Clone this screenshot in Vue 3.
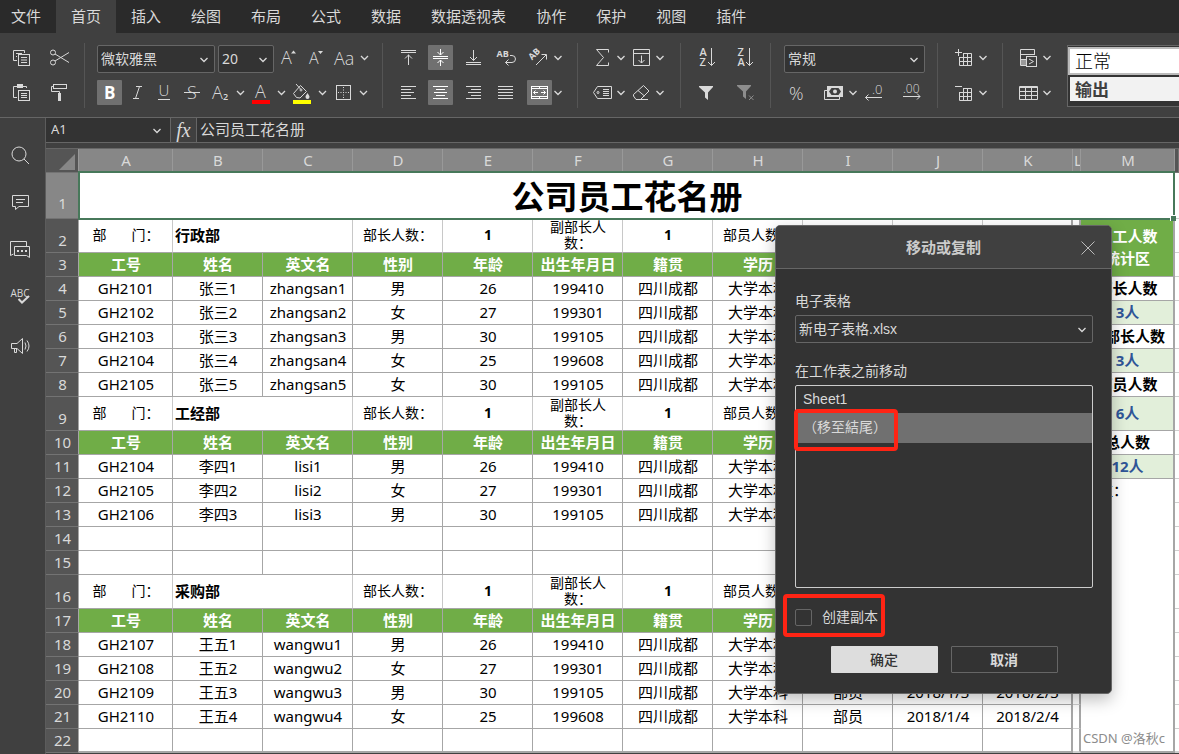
<script setup>
import { ref } from 'vue'

const menus = ['文件', '首页', '插入', '绘图', '布局', '公式', '数据', '数据透视表', '协作', '保护', '视图', '插件']

const icons = {
  copy: '<path d="M8 15.5H4.5V5.5H15.5V8M7 8.5H13M7 11.5H8"/><rect x="9.5" y="9.5" width="11" height="11"/><path d="M12 12.5H18M12 15H18M12 17.5H18"/>',
  cut: '<circle cx="6" cy="7.5" r="2.5"/><circle cx="6" cy="17.5" r="2.5"/><path d="M8 9L22 17.5M8 16L22 7.5"/>',
  paste: '<path d="M8 17.5H4.5V6.5H17.5V8"/><rect x="8" y="4" width="6" height="4" fill="currentColor" stroke="none"/><rect x="9.5" y="10.5" width="11" height="10"/><path d="M12 13.5H18M12 15.5H18M12 17.5H18"/>',
  painter: '<rect x="6.5" y="4.5" width="13" height="4"/><path d="M6.5 6.5H4.5V11.5H12.5V14"/><rect x="11" y="13" width="3" height="8" fill="currentColor" stroke="none"/>',
  grow: '<text x="4" y="19" font-size="18">A</text><path class="f" d="M14 8.5L16.5 5.5 19 8.5Z"/>',
  shrink: '<text x="4" y="19" font-size="16">A</text><path class="f" d="M13 6L18 6 15.500 9Z"/>',
  case: '<text x="1" y="20" font-size="18">Aa</text>',
  bold: '<text x="7" y="19" font-size="17" style="font-weight:700">B</text>',
  italic: '<path d="M11 6.500H17M8 18.500H14M14.500 6.500L10.500 18.500"/>',
  underline: '<text x="5.500" y="16" font-size="15">U</text><path d="M5 19.500H17"/>',
  strike: '<text x="6" y="19" font-size="18">S</text><path d="M3 12.500H19"/>',
  sub: '<text x="3" y="19" font-size="18">A</text><text x="14" y="20" font-size="9" style="font-weight:600">2</text>',
  color: '<text x="5" y="18" font-size="18">A</text><path d="M2 22H20" stroke="#f00" stroke-width="4"/>',
  fill: '<path d="M9.500 5.500L15.500 11.500 9 18 5.500 17.500 2.500 13.500ZM5 4L9.500 9"/><circle cx="10" cy="10" r="1"/><path class="f" d="M16.500 13C18 15.500 18.500 16 18.500 17A2 2 0 0 1 14.500 17C14.500 16 15 15.500 16.500 13Z"/><path d="M2 22H20" stroke="#ff0" stroke-width="4"/>',
  borders: '<rect x="4.500" y="5.500" width="14" height="14"/><path d="M11.500 7V19M6 12.500H18" stroke-dasharray="1 1.500"/>',
  top: '<path d="M6 5.500H21M6 7.500H21M13.500 9.500V20M10 13.500L13.500 10 17 13.500"/>',
  middle: '<path d="M5 11.500H20M5 13.500H20M12.500 4V10M12.500 15V21M9.500 7L12.500 10 15.500 7M9.500 18L12.500 15 15.500 18"/>',
  bottom: '<path d="M5 17.500H20M5 19.500H20M12.500 5V15.500M9 12L12.500 15.500 16 12"/>',
  wrap: '<text x="2.500" y="12" font-size="9" style="font-weight:700">AB</text><path d="M16 10.500H18A3.500 3.500 0 0 1 18 17.500H11.500M14.500 14.500L11.500 17.500 14.500 20.500"/>',
  rotate: '<text x="5" y="15.500" font-size="9" style="font-weight:700" transform="rotate(-45 5 15.500)">AB</text><path d="M9 20L19 10M14.500 9.500H19.500V14.500"/>',
  left: '<path d="M6 6.500H21M6 9.500H16M6 12.500H19M6 15.500H16M6 18.500H21"/>',
  center: '<path d="M5 6.500H20M8 9.500H17M6 12.500H19M8 15.500H17M5 18.500H20"/>',
  right: '<path d="M5 6.500H20M10 9.500H20M7 12.500H20M10 15.500H20M5 18.500H20"/>',
  justify: '<path d="M4 6.500H19M4 9.500H19M4 12.500H19M4 15.500H19M4 18.500H19"/>',
  merge: '<rect x="4.500" y="6.500" width="16" height="12"/><path d="M4 8.500H21M4 16.500H21M12.500 6V8M12.500 17V19M6.500 12.500H11M14 12.500H18.500M8.500 10.500L6.500 12.500 8.500 14.500M16.500 10.500L18.500 12.500 16.500 14.500"/>',
  sum: '<path d="M18.500 7.500V4.500H6.500L13.500 12.500 6.500 20.500H18.500V17.500"/>',
  filldown: '<path d="M4.500 4.500H20.500V20.500H4.500ZM4.500 8.500H20.500M12.500 10.500V18M9.500 15L12.500 18 15.500 15"/>',
  tag: '<path d="M3.500 12.500L7.500 6.500H21.500V18.500H7.500ZM13 9.500H19M13 11.500H19M13 13.500H19M13 15.500H19"/><circle cx="8" cy="12.500" r="1"/>',
  eraser: '<path d="M14.500 5.500L20 11 11.500 19.500H7L4.500 16V14.500ZM9 10.500L15.500 16M7 19.500H19"/>',
  az: '<text x="5.500" y="11" font-size="11" style="font-weight:600">A</text><text x="5.500" y="21" font-size="11" style="font-weight:600">Z</text><path d="M17.500 3V20.500M14 17L17.500 20.500 21 17"/>',
  za: '<text x="5.500" y="11" font-size="11" style="font-weight:600">Z</text><text x="5.500" y="21" font-size="11" style="font-weight:600">A</text><path d="M17.500 3V20.500M14 17L17.500 20.500 21 17"/>',
  filter: '<path class="f" d="M5 6H19V7L14 12.500V20L11 17.500V12.500L5 7Z"/>',
  unfilter: '<g opacity=".5"><path class="f" d="M5 5H19V6L14 11.500V19L11 16.500V11.500L5 6Z"/><path d="M17 15.500L21.500 20M21.500 15.500L17 20"/></g>',
  percent: '<text x="5" y="20" font-size="18">%</text>',
  cash: '<path d="M6 10.500H3.500V19.500H18.500V17"/><rect x="6" y="6" width="16" height="11" fill="currentColor" stroke="none"/><path d="M8 11.500L10.500 8H17.500L20 11.500 17.500 15H10.500Z" fill="#404040" stroke="none"/><circle class="f" cx="14" cy="11.500" r="2"/>',
  dec0: '<text x="10" y="14" font-size="13">.0</text><path d="M3.500 17.500H20M6.500 14.500L3.500 17.500 6.500 20.500"/>',
  dec00: '<text x="4" y="13" font-size="12">.00</text><path d="M4 16.500H21M18 13.500L21 16.500 18 19.500"/>',
  inscell: '<path d="M3 7.500H10M6.500 4V11M11 8.500H19.500V20.500H7.500V12M7.500 12.500H19.500M7.500 16.500H19.500M11.500 8.500V20.500M15.500 8.500V20.500"/>',
  delcell: '<path d="M3 6.500H10M11 8.500H19.500V20.500H7.500V12M7.500 12.500H19.500M7.500 16.500H19.500M11.500 8.500V20.500M15.500 8.500V20.500"/>',
  cond: '<path d="M10 20.500H4.500V4.500H18.500V10M4.500 9.500H18.500"/><rect x="5" y="15" width="5" height="5" fill="#999" stroke="none"/><path d="M4.500 14.500H10"/><rect x="10.500" y="11.500" width="10" height="10"/><path d="M13 14L17.500 16.500 13 19"/>',
  table: '<path d="M3.500 6.500H21.500V19.500H3.500ZM3.500 7.500H21.500M3.500 11.500H21.500M3.500 15.500H21.500M9.500 8V19M15.500 8V19"/>',
  search: '<circle cx="11" cy="11" r="7"/><path d="M16 16L21 21"/>',
  comment: '<path d="M4.500 5.500H20.500V16.500H11L7.500 19.500V16.500H4.500ZM8 9.500H17M8 12.500H15"/>',
  chat: '<path d="M5.500 17L2.500 18.500V4.500H18.500V9M6.500 9.500H21.500V20.500L18.500 18.500H6.500Z"/><path class="f" d="M9 13h2v2h-2zM13 13h2v2h-2zM17 13h2v2h-2z"/>',
  spell: '<text x="2.500" y="13" font-size="10" style="font-weight:400">ABC</text><path d="M10.500 15L14 18.500 21 12" stroke-width="2"/>',
  horn: '<path d="M3.500 12.500H9L14.500 7.500V22.500L9 17.500H3.500ZM6.500 18V21.500H8.500V18M17 11.500Q19 15 17 18.500M19 9.500Q23 15 19 20.500"/>'
}

const b = (icon, name, opt = {}) => ({ icon, name, ...opt })
const groups = [
  { cls: 'g-clip', rows: [[b('copy', '复制'), b('cut', '剪切')], [b('paste', '粘贴'), b('painter', '格式刷')]] },
  { cls: 'g-font', rows: [
    [{ combo: '微软雅黑', name: '字体', cls: 'c-font' }, { combo: '20', name: '字号', cls: 'c-size' }, b('grow', '增大字号'), b('shrink', '减小字号'), b('case', '更改大小写', { more: true })],
    [b('bold', '加粗', { on: true }), b('italic', '斜体'), b('underline', '下划线'), b('strike', '删除线'), b('sub', '下标', { more: true }), b('color', '字体颜色', { more: true }), b('fill', '填充颜色', { more: true }), b('borders', '边框', { more: true })]
  ] },
  { cls: 'g-align', rows: [
    [b('top', '顶端对齐'), b('middle', '垂直居中', { on: true }), b('bottom', '底端对齐'), b('wrap', '自动换行'), b('rotate', '方向', { more: true })],
    [b('left', '左对齐'), b('center', '居中', { on: true }), b('right', '右对齐'), b('justify', '两端对齐'), b('merge', '合并', { on: true, more: true })]
  ] },
  { cls: 'g-func', rows: [[b('sum', '求和', { more: true }), b('filldown', '填充', { more: true })], [b('tag', '命名区域', { more: true }), b('eraser', '清除', { more: true })]] },
  { cls: 'g-sort', rows: [[b('az', '升序'), b('za', '降序')], [b('filter', '筛选'), b('unfilter', '清除筛选')]] },
  { cls: 'g-num', rows: [
    [{ combo: '常规', name: '数字格式', cls: 'c-num' }],
    [b('percent', '百分比'), b('cash', '会计格式', { more: true }), b('dec0', '减少小数位'), b('dec00', '增加小数位')]
  ] },
  { cls: 'g-cell', rows: [[b('inscell', '插入单元格', { more: true })], [b('delcell', '删除单元格', { more: true })]] },
  { cls: 'g-tpl', rows: [[b('cond', '条件格式', { more: true })], [b('table', '表格模板', { more: true })]] }
]
const side = [['search', '搜索'], ['comment', '批注'], ['chat', '聊天'], ['spell', '拼写检查'], ['horn', '反馈']]

const cols = 'ABCDEFGHIJKLM'.split('')
const heads = ['工号', '姓名', '英文名', '性别', '年龄', '出生年月日', '籍贯', '学历', '职务', '入职日期', '转正日期']
const ages = ['26', '27', '30', '25', '30']
const births = ['199410', '199301', '199105', '199608', '199105']
const sexes = ['男', '女', '男', '女', '女']
const man = (id, name, en, i) => ({
  type: 'data',
  cells: [id, name, en, sexes[i], ages[i], births[i], '四川成都', '大学本科', '部员', `2018/1/${i + 1}`, `2018/2/${i + 1}`]
})
const empty = () => ({ type: 'data', cells: Array(11).fill('') })
const rows = [
  { type: 'dept', name: '行政部' }, { type: 'head' },
  man('GH2101', '张三1', 'zhangsan1', 0), man('GH2102', '张三2', 'zhangsan2', 1),
  man('GH2103', '张三3', 'zhangsan3', 2), man('GH2104', '张三4', 'zhangsan4', 3),
  man('GH2105', '张三5', 'zhangsan5', 4),
  { type: 'dept', name: '工经部' }, { type: 'head' },
  man('GH2104', '李四1', 'lisi1', 0), man('GH2105', '李四2', 'lisi2', 1), man('GH2106', '李四3', 'lisi3', 2),
  empty(), empty(),
  { type: 'dept', name: '采购部' }, { type: 'head' },
  man('GH2107', '王五1', 'wangwu1', 0), man('GH2108', '王五2', 'wangwu2', 1), man('GH2109', '王五3', 'wangwu3', 2), man('GH2110', '王五4', 'wangwu4', 3),
  empty()
]
const stats = {
  0: { text: '员工人数\n统计区', span: 2, cls: 's-head' },
  2: { text: '部长人数', cls: 's-label' }, 3: { text: '3人', cls: 's-val' },
  4: { text: '副部长人数', cls: 's-label' }, 5: { text: '3人', cls: 's-val' },
  6: { text: '部员人数', cls: 's-label' }, 7: { text: '6人', cls: 's-val' },
  8: { text: '总人数', cls: 's-label' }, 9: { text: '12人', cls: 's-val' },
  10: { text: '备注：', span: 11, cls: 's-note' }
}
const formula = ref('公司员工花名册')
const copyIt = ref(false)
const target = ref(1)
const sheets = ['Sheet1', '（移至結尾）']
</script>

<template>
  <div class="app">
    <nav class="menu">
      <button v-for="(m, i) in menus" :key="m" :class="{ active: i === 1 }">{{ m }}</button>
    </nav>

    <header class="ribbon">
      <section v-for="g in groups" :key="g.cls" class="group" :class="g.cls">
        <div v-for="(r, ri) in g.rows" :key="ri" class="tools">
          <template v-for="t in r" :key="t.name">
            <label v-if="t.combo" class="combo" :class="t.cls">
              <select :aria-label="t.name"><option>{{ t.combo }}</option></select>
              <svg class="chev" viewBox="0 0 12 12"><path d="M2.500 4L6 7.500 9.500 4" /></svg>
            </label>
            <button v-else class="tool" :aria-label="t.name" :title="t.name">
              <svg class="ic" :class="{ on: t.on }" viewBox="0 0 25 25" v-html="icons[t.icon]"></svg>
              <svg v-if="t.more" class="chev" viewBox="0 0 12 12"><path d="M2.500 4L6 7.500 9.500 4" /></svg>
            </button>
          </template>
        </div>
      </section>
      <section class="gallery">
        <button class="st normal">正常</button>
        <button class="st output">输出</button>
      </section>
    </header>

    <div class="main">
      <aside class="side">
        <button v-for="s in side" :key="s[0]" :aria-label="s[1]">
          <svg class="ic" viewBox="0 0 25 25" v-html="icons[s[0]]"></svg>
        </button>
      </aside>

      <div class="work">
        <div class="fbar">
          <label class="namebox">
            <select aria-label="名称框"><option>A1</option></select>
            <svg class="chev" viewBox="0 0 12 12"><path d="M2.500 4L6 7.500 9.500 4" /></svg>
          </label>
          <button class="fx">fx</button>
          <input v-model="formula" class="formula" aria-label="编辑栏" />
        </div>

        <table class="sheet">
          <colgroup>
            <col class="w-no" /><col class="w-a" /><col v-for="n in 10" :key="n" class="w-n" /><col class="w-l" /><col class="w-a" /><col />
          </colgroup>
          <thead>
            <tr>
              <th class="corner"><svg viewBox="0 0 16 16"><path d="M16 0V16H0Z" /></svg></th>
              <th v-for="c in cols" :key="c" class="col">{{ c }}</th>
              <th class="rest"></th>
            </tr>
          </thead>
          <tbody>
            <tr class="title-row">
              <th class="no sel">1</th>
              <td class="title" colspan="13">公司员工花名册<span class="selbox"><i></i></span></td>
              <td class="n"></td>
            </tr>
            <tr v-for="(r, i) in rows" :key="i" :class="[r.type, { last: i === rows.length - 1 }]">
              <th class="no">{{ i + 2 }}</th>
              <template v-if="r.type === 'dept'">
                <td class="pre">部　&nbsp;&nbsp;&nbsp;门：</td>
                <td colspan="2" class="dname">{{ r.name }}</td>
                <td>部长人数：</td>
                <td class="cnt">1</td>
                <td>副部长人<br />数：</td>
                <td class="cnt">1</td>
                <td>部员人数：</td>
                <td></td><td></td><td class="k"></td>
              </template>
              <template v-else-if="r.type === 'head'">
                <td v-for="(h, j) in heads" :key="j" :class="{ k: j === 10 }">{{ h }}</td>
              </template>
              <template v-else>
                <td v-for="(c, j) in r.cells" :key="j" :class="{ k: j === 10 }">{{ c }}</td>
              </template>
              <td class="l"></td>
              <td v-if="stats[i]" :rowspan="stats[i].span || 1" class="m" :class="stats[i].cls">{{ stats[i].text }}</td>
              <td class="n"></td>
            </tr>
          </tbody>
        </table>
      </div>
    </div>

    <div class="dialog" role="dialog" aria-labelledby="dlg-title">
      <div class="dhead">
        <h2 id="dlg-title">移动或复制</h2>
        <button class="close" aria-label="关闭"><svg viewBox="0 0 14 14"><path d="M.5 .5L13.500 13.500M13.500 .5L.5 13.500" /></svg></button>
      </div>
      <div class="dbody">
        <label class="lab" for="book">电子表格</label>
        <div class="combo book">
          <select id="book"><option>新电子表格.xlsx</option></select>
          <svg class="chev" viewBox="0 0 12 12"><path d="M2.500 4L6 7.500 9.500 4" /></svg>
        </div>
        <div id="before" class="lab">在工作表之前移动</div>
        <div class="list" role="listbox" aria-labelledby="before">
          <button v-for="(s, i) in sheets" :key="s" role="option" :aria-selected="target === i" :class="{ picked: target === i }" @click="target = i">{{ s }}</button>
          <span class="mark mark-list"></span>
        </div>
        <label class="check"><input v-model="copyIt" type="checkbox" /><span>创建副本</span><span class="mark mark-check"></span></label>
        <div class="actions">
          <button class="ok">确定</button>
          <button class="cancel">取消</button>
        </div>
      </div>
    </div>
    <div class="watermark">CSDN @洛秋c</div>
  </div>
</template>

<style>
body { margin: 0; background: #404040; }
.ic text { font-family: "Open Sans", "Noto Sans", sans-serif; font-weight: 300; fill: currentColor; stroke: none; }
.ic .f { fill: currentColor; stroke: none; }
</style>

<style scoped>
* { box-sizing: border-box; }
.app { position: relative; height: 100vh; overflow: hidden; display: flex; flex-direction: column; font: 15px/20px "Noto Sans", "Noto Sans CJK SC", sans-serif; color: #d9d9d9; background: #404040; }
button, select, input { font: inherit; color: inherit; margin: 0; padding: 0; border: 0; background: none; outline: none; }
select { appearance: none; width: 100%; height: 100%; }
.menu { display: flex; flex: none; height: 33px; background: #2a2a2a; }
.menu button { padding: 0 15px 2px; font-size: 15px; }
.menu button:first-child { padding-left: 11px; }
.menu button.active { background: #404040; }

.ribbon { display: flex; flex: none; height: 85px; padding-top: 10px; border-bottom: 1px solid #666; overflow: hidden; }
.group { flex: none; height: 65px; padding-top: 2px; padding-left: 13px; border-right: 1px solid #555; }
.tools { display: flex; align-items: flex-start; height: 25px; }
.tools:first-child { height: 28px; margin-bottom: 7px; }
.g-clip { width: 85px; padding-left: 9px; }
.g-clip .tools { gap: 13px; }
.g-font { width: 298px; padding-left: 12px; }
.g-font .tools { gap: 3px; }
.g-font .tool .chev { width: 13px; }
.g-align { width: 195px; padding-left: 12px; }
.g-align .tools { gap: 8px; }
.g-func { width: 103px; padding-left: 12px; }
.g-func .tools { gap: 2px; }
.g-sort { width: 90px; }
.g-sort .tools { gap: 13px; }
.g-num { width: 167px; }
.g-num .tools:last-child { display: grid; grid-template-columns: 37px 41px 37px 25px; }
.g-num .tool .chev { margin-left: 1px; }
.g-cell { width: 65px; padding-left: 14px; }
.g-tpl { width: 64px; border-right: 0; }
.tool { display: flex; align-items: center; flex: none; height: 25px; color: #d9d9d9; }
.ic { display: block; width: 25px; height: 25px; fill: none; stroke: currentColor; overflow: visible; }
.ic.on { background: #707070; color: #fff; border-radius: 1px; }
.chev { display: block; flex: none; width: 12px; height: 12px; fill: none; stroke: #d9d9d9; stroke-width: 1.3; }
.combo { position: relative; display: block; flex: none; height: 28px; border: 1px solid #666; border-radius: 2px; background: #333; }
.combo select { padding-left: 3px; font-size: 14px; }
.combo .chev { position: absolute; right: 4px; top: 8px; pointer-events: none; }
.c-font { width: 118px; }
.c-size { width: 56px; }
.c-num { width: 141px; }
.gallery { flex: 1; display: flex; flex-direction: column; gap: 2px; height: 62px; margin-top: 2px; padding: 1px 0 0; border: 1px solid #666; border-right: 0; background: #333; overflow: hidden; }
.st { height: 28px; padding-left: 5px; text-align: left; font: 18px/22px "Noto Sans CJK SC", sans-serif; }
.normal { border: 2px solid #bbb; border-right: 0; padding-bottom: 2px; background: #fff; color: #000; font-weight: 300; }
.output { margin-left: 2px; height: 24px; background: #f2f2f2; color: #3f3f3f; font-size: 17px; font-weight: 700; }

.main { display: flex; flex: 1; min-height: 0; }
.side { display: flex; flex-direction: column; align-items: center; gap: 22px; flex: none; width: 46px; padding: 25px 4px 0 0; border-right: 1px solid #5c5c5c; }
.side button { height: 25px; }
.work { flex: 1; min-width: 0; overflow: hidden; }
.fbar { display: flex; height: 25px; margin-bottom: 5px; border-bottom: 1px solid #666; background: #333; }
.namebox { position: relative; width: 125px; border-right: 1px solid #666; }
.namebox select { padding: 0 0 2px 5px; font-size: 13px; }
.namebox .chev { position: absolute; right: 7px; top: 7px; }
.fx { width: 26px; border-right: 1px solid #666; background: #404040; font: italic 20px/22px "Liberation Serif", serif; }
.formula { flex: 1; padding: 0 0 2px 3px; }

.sheet { width: 100%; table-layout: fixed; border-collapse: separate; border-spacing: 0; border-top: 1px solid #666; color: #000; background: #fff; }
.w-no { width: 33px; }
.w-a { width: 94px; }
.w-n { width: 90px; }
.w-l { width: 8px; }
.sheet tr { height: 24px; }
.sheet th, .sheet td { padding: 0 0 1px 1px; overflow: hidden; border-right: 1px solid #a6a6a6; border-bottom: 1px solid #a6a6a6; text-align: center; white-space: nowrap; }
.sheet th { font-weight: 400; color: #d9d9d9; background: #555; border-color: #737373; }
.sheet th.col { background: #878787; border-color: #999; }
.sheet th.corner { border-right-color: #999; vertical-align: bottom; }
.corner svg { display: block; width: 16px; height: 16px; margin: 0 3px 1px auto; fill: #878787; }
.sheet th.no { vertical-align: bottom; line-height: 22px; border-right-color: #a6a6a6; }
.sheet th.sel { background: #878787; line-height: 28px; }
.sheet tr.title-row { height: 46px; }
.sheet td.title { position: relative; overflow: visible; font: 700 33px/44px "Noto Sans CJK SC", sans-serif; }
.selbox { position: absolute; inset: -2px -1px -2px -1px; border: 2px solid #47785a; }
.selbox i { position: absolute; right: -3px; bottom: -3px; width: 6px; height: 6px; border: 1px solid #fff; border-width: 1px 0 0 1px; background: #47785a; }
.sheet td.n { border-right: 0; border-color: #cfcfcf; }
.sheet tr.dept { height: 34px; }
.dept td { font-size: 14px; line-height: 16px; border-right-color: #c8c8c8; }
.dept td.pre { white-space: pre; }
.sheet td.dname { padding-left: 2px; text-align: left; font-size: 15px; font-weight: 700; }
.dept td.cnt { font-weight: 700; }
.head td { font-weight: 700; color: #fff; background: #70ad47; }
.sheet td.k { border-right: 2px solid #a6a6a6; }
.sheet td.l { background: #fff; border-right: 2px solid #a6a6a6; border-bottom-color: #cfcfcf; }
.sheet td.n { background: #fff; }
.sheet td.m { border-right: 2px solid #a6a6a6; font-size: 15px; line-height: 22px; font-weight: 700; white-space: pre; color: #000; background: #fff; }
.sheet td.s-head { color: #fff; background: #70ad47; }
.sheet td.s-val { color: #2f5597; background: #e2efda; }
.sheet td.s-note { padding-left: 2px; border-bottom-width: 2px; text-align: left; vertical-align: top; font-weight: 400; }
.last td { border-bottom-width: 2px; }

.dialog { position: absolute; left: 775px; top: 225px; width: 337px; border: 1px solid #666; border-radius: 5px; background: #333; box-shadow: 0 6px 16px rgba(0, 0, 0, .25); font-family: "Liberation Sans", "Noto Sans CJK SC", sans-serif; font-size: 14px; }
.dhead { position: relative; height: 43px; border-bottom: 1px solid #666; border-radius: 4px 4px 0 0; background: #404040; }
.dhead h2 { margin: 0; font-size: 15px; line-height: 44px; text-align: center; color: #ccc; }
.close { position: absolute; right: 16px; top: 15px; width: 14px; height: 14px; }
.close svg { display: block; fill: none; stroke: #bbb; }
.dbody { padding: 22px 18px 20px 19px; }
.lab { display: block; height: 24px; }
.book { margin-bottom: 18px; }
.book .chev { top: 8px; }
.list { position: relative; height: 203px; border: 1px solid #ccc; border-radius: 2px; }
.list button { display: block; width: 100%; height: 27px; padding: 0 0 2px 7px; text-align: left; }
.list button.picked { height: 30px; background: #707070; }
.mark { position: absolute; border: 4px solid #ff2414; border-radius: 4px; pointer-events: none; }
.mark-list { left: -2px; top: 23px; width: 104px; height: 42px; }
.check { position: relative; display: flex; align-items: center; gap: 10px; width: 84px; height: 20px; margin-top: 19px; }
.check input { appearance: none; width: 17px; height: 17px; border: 1px solid #666; border-radius: 2px; }
.check input:checked { background: #d9d9d9; }
.mark-check { left: -12px; top: -13px; width: 102px; height: 43px; }
.actions { display: flex; justify-content: center; gap: 13px; margin-top: 19px; }
.actions button { width: 107px; height: 27px; border-radius: 1px; font-weight: 500; }
.actions .ok { background: #ddd; color: #333; }
.actions .cancel { border: 1px solid #666; font-weight: 700; }
.watermark { position: absolute; right: 14px; bottom: 6px; font-size: 13px; color: #8c8c8c; }
</style>
